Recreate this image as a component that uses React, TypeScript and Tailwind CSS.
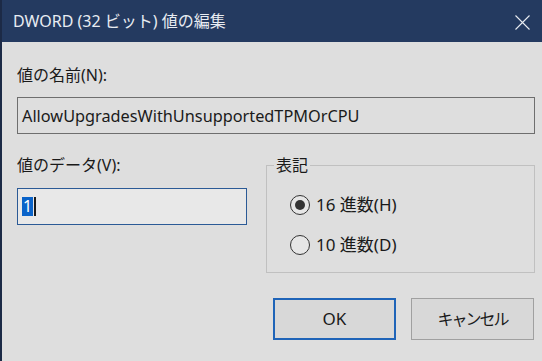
import React from "react";

const font = { fontFamily: '"Noto Sans", "Noto Sans CJK JP", sans-serif' };

function Radio({ checked, label }: { checked: boolean; label: string }) {
  return (
    <div className="flex items-center h-[22px]">
      <div className="w-[20px] h-[20px] rounded-full border border-[#333333] bg-[#e6e6e6] flex items-center justify-center">
        {checked && <div className="w-[10px] h-[10px] rounded-full bg-[#333333]" />}
      </div>
      <span className="ml-[6px] text-[17px] leading-[22px] text-[#1a1a1a]">{label}</span>
    </div>
  );
}

export default function App() {
  return (
    <div
      className="w-[542px] h-[361px] bg-[#dedede] border-l-2 border-[#1c2a46] overflow-hidden flex flex-col"
      style={font}
    >
      <div className="h-[42px] shrink-0 bg-[#243a60] flex items-center justify-between pl-[11px] pr-[12px]">
        <span className="text-[16px] leading-[22px] text-[#e8ecf2]">DWORD (32 ビット) 値の編集</span>
        <svg width="15" height="15" viewBox="0 0 15 15" className="mb-[-2px]">
          <path d="M0.5 0.5 L14.5 14.5 M14.5 0.5 L0.5 14.5" stroke="#e8ecf2" strokeWidth="1.1" />
        </svg>
      </div>
      <div className="flex flex-col pl-[15px] pr-[7px]">
        <div className="mt-[22px] text-[16px] leading-[22px] text-[#1a1a1a]">値の名前(N):</div>
        <div className="mt-[11px] h-[37px] border border-[#6e6e6e] bg-[#dedede] flex items-center pl-[4px]">
          <span className="text-[16.3px] leading-[22px] text-[#1a1a1a]">AllowUpgradesWithUnsupportedTPMOrCPU</span>
        </div>
        <div className="flex mt-[20px]">
          <div className="w-[230px] flex flex-col">
            <div className="text-[16px] leading-[22px] text-[#1a1a1a]">値のデータ(V):</div>
            <div className="mt-[12px] h-[37px] border border-[#2b5a96] bg-[#e8e8e8] flex items-center pl-[4px]">
              <span className="bg-[#0a63c9] text-white text-[16px] leading-[19px] px-[1px]">1</span>
              <span className="w-[2px] h-[19px] bg-[#1a1a1a] ml-[1px]" />
            </div>
          </div>
          <fieldset className="ml-[19px] w-[269px] h-[119px] border border-[#c0c0c0] pl-[23px] pt-[18px]">
            <legend className="ml-[-16px] px-[2px] text-[16px] leading-[22px] text-[#1a1a1a]">表記</legend>
            <Radio checked label="16 進数(H)" />
            <div className="mt-[18px]">
              <Radio checked={false} label="10 進数(D)" />
            </div>
          </fieldset>
        </div>
        <div className="flex justify-end mt-[25px] gap-[15px] pr-[1px]">
          <button className="w-[123px] h-[42px] border-2 border-[#1f64b8] bg-[#d8d8d8] text-[17px] text-[#1a1a1a]">
            OK
          </button>
          <button className="w-[123px] h-[42px] border border-[#a0a0a0] bg-[#d8d8d8] text-[16px] tracking-[-2px] text-[#1a1a1a]">
            キャンセル
          </button>
        </div>
      </div>
    </div>
  );
}
